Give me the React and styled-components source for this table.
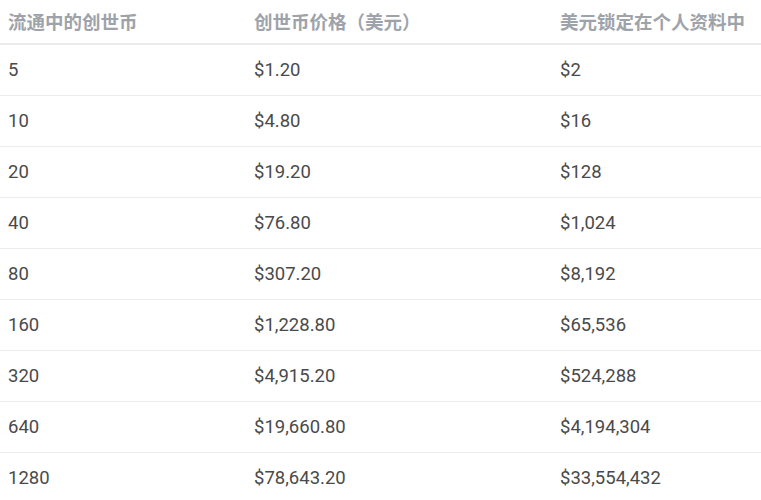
import styled, { createGlobalStyle } from 'styled-components';

const GlobalStyle = createGlobalStyle`
	body {
		margin: 0;
		background: #ffffff;
		font-family: Roboto, "Noto Sans CJK SC", sans-serif;
	}
`;

const Table = styled.table`
	width: 100%;
	border-collapse: collapse;
	table-layout: fixed;
	font-size: 18.5px;
	color: #4a4a4a;

	col.first {
		width: 246px;
	}
	col.second {
		width: 306px;
	}
`;

const HeadCell = styled.th`
	height: 41px;
	padding: 0 8px 2px;
	text-align: left;
	font-weight: 700;
	color: #9ea3aa;
	border-bottom: 2px solid #ebebeb;
	white-space: nowrap;
	vertical-align: middle;
`;

const Cell = styled.td`
	height: 50px;
	padding: 0 8px;
	border-bottom: 1px solid #ececec;
	vertical-align: middle;
	white-space: nowrap;
`;

const rows = [
	['5', '$1.20', '$2'],
	['10', '$4.80', '$16'],
	['20', '$19.20', '$128'],
	['40', '$76.80', '$1,024'],
	['80', '$307.20', '$8,192'],
	['160', '$1,228.80', '$65,536'],
	['320', '$4,915.20', '$524,288'],
	['640', '$19,660.80', '$4,194,304'],
	['1280', '$78,643.20', '$33,554,432'],
];

const App = () => {
	return (
		<>
			<GlobalStyle />
			<Table>
				<colgroup>
					<col className="first" />
					<col className="second" />
					<col />
				</colgroup>
				<thead>
					<tr>
						<HeadCell>流通中的创世币</HeadCell>
						<HeadCell>创世币价格（美元）</HeadCell>
						<HeadCell>美元锁定在个人资料中</HeadCell>
					</tr>
				</thead>
				<tbody>
					{rows.map((row) => (
						<tr key={row[0]}>
							{row.map((value, i) => (
								<Cell key={i}>{value}</Cell>
							))}
						</tr>
					))}
				</tbody>
			</Table>
		</>
	);
};

export default App;
